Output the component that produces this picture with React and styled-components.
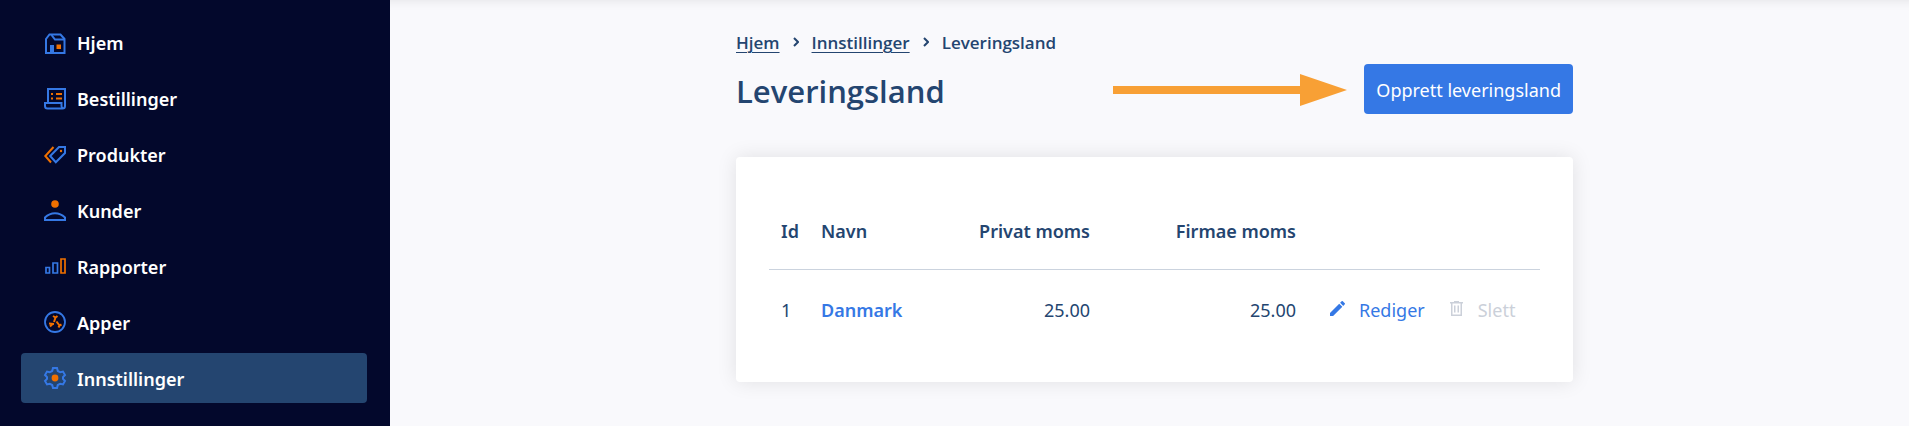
import React from 'react'
import styled, { createGlobalStyle } from 'styled-components'

const GlobalStyle = createGlobalStyle`
  * {
    box-sizing: border-box;
  }

  body {
    margin: 0;
    background-color: #f9f9fc;
    color: #244570;
    font-family: "Noto Sans", "Open Sans", sans-serif;
    font-size: 18px;
    line-height: 24px;
  }
`

const Page = styled.div`
  display: flex;
  min-height: 100vh;
`

const Sidebar = styled.nav`
  display: flex;
  flex-direction: column;
  flex-shrink: 0;
  gap: 6px;
  width: 390px;
  padding: 17px 23px 17px 21px;
  background-color: #03082c;
`

const MenuLink = styled.a`
  display: flex;
  align-items: center;
  gap: 11px;
  height: 50px;
  padding: 0 23px;
  border-radius: 4px;
  background-color: ${({ $active }) => ($active ? '#244570' : 'transparent')};
  color: #fff;
  font-weight: 600;
  text-decoration: none;
`

const MenuLabel = styled.span`
  padding-top: 2px;
`

const MenuIcon = styled.svg`
  flex-shrink: 0;
  width: 22px;
  height: 22px;
  overflow: visible;
  fill: none;
  stroke: #3578e5;
  stroke-width: 2;

  .orange {
    stroke: #f07000;
  }

  .orange-fill {
    fill: #f07000;
    stroke: none;
  }

  .blue-fill {
    fill: #3578e5;
    stroke: none;
  }
`

const Main = styled.main`
  flex: 1;
  padding: 32px 20px 32px 30px;
  box-shadow: inset 0 12px 12px -12px rgba(0, 0, 0, 0.1);
`

const Content = styled.div`
  max-width: 837px;
  margin: 0 auto;
`

const Breadcrumb = styled.nav`
  display: flex;
  align-items: center;
  gap: 13px;
  margin-bottom: 10px;
  font-family: "Open Sans", sans-serif;
  font-size: 17px;
  font-weight: 600;
  line-height: 22px;
`

const BreadcrumbLink = styled.a`
  color: inherit;
  text-decoration: underline;
  text-decoration-thickness: 1px;
  text-underline-offset: 3px;
`

const Chevron = styled.svg`
  width: 6px;
  height: 10px;
  margin-bottom: 2px;
  fill: none;
  stroke: #244570;
  stroke-width: 2;
`

const Header = styled.header`
  display: flex;
  align-items: center;
  gap: 17px;
  margin-bottom: 43px;
`

const Title = styled.h1`
  margin: 0 auto 0 0;
  padding-top: 4px;
  font-family: "Open Sans", sans-serif;
  font-size: 31px;
  font-weight: 600;
  line-height: 46px;
`

const Arrow = styled.svg`
  width: 234px;
  height: 32px;
  margin-top: 2px;
  fill: #f8a035;
`

const CreateButton = styled.button`
  height: 50px;
  padding: 2px 12px 0;
  border: none;
  border-radius: 4px;
  background-color: #3578e5;
  color: #fff;
  font: inherit;
  cursor: pointer;
`

const Card = styled.section`
  padding: 33px;
  border-radius: 4px;
  background-color: #fff;
  box-shadow: 0 0 20px rgba(0, 0, 0, 0.1);
`

const Table = styled.table`
  width: 100%;
  table-layout: fixed;
  border-collapse: separate;
  border-spacing: 0;
`

const HeadCell = styled.th`
  width: ${({ $width }) => $width};
  height: 80px;
  padding: 2px 12px 0;
  border-bottom: 1px solid #cbd3de;
  font-weight: 600;
  text-align: ${({ $align }) => $align || 'left'};
  white-space: nowrap;
`

const Cell = styled.td`
  height: 79px;
  padding: 0 12px;
  text-align: ${({ $align }) => $align || 'left'};
`

const CountryLink = styled.a`
  color: #3578e5;
  font-weight: 600;
  text-decoration: none;
`

const Actions = styled.div`
  display: flex;
  gap: 24px;
  padding-left: 10px;
`

const ActionButton = styled.button`
  display: flex;
  align-items: center;
  gap: 14px;
  padding: 0;
  border: none;
  background: none;
  color: #3578e5;
  font: inherit;
  cursor: pointer;

  &:disabled {
    color: #cbd0d9;
    cursor: default;
  }
`

const ActionIcon = styled.svg`
  width: 15px;
  height: 15px;
  margin-bottom: 2px;
  fill: currentColor;
`

const menuItems = [
  {
    label: 'Hjem',
    icon: (
      <>
        <path d="M2 22V8L5.5 3.5h11L20.5 8v14z" />
        <path d="M7.5 4l3.5 4.5h9.5" />
        <path className="blue-fill" d="M6 14h4v8H6z" />
        <path className="orange-fill" d="M12.5 13.5H17V18h-4.500z" />
      </>
    ),
  },
  {
    label: 'Bestillinger',
    icon: (
      <>
        <path d="M4 16V2h17v17q0 2.500-2.500 2.500H3.500Q1 21.500 1 19v-3h16.500v3q0 2 1.500 2.500" />
        <path className="orange-fill" d="M7 6h2v2H7zM12 6h6v2h-6zM7 10.500h2v2H7zM12 10.500h6v2h-6z" />
      </>
    ),
  },
  {
    label: 'Produkter',
    icon: (
      <>
        <path className="orange" d="M9.500 4L1.300 13l5.700 6.500" />
        <path d="M15 4h6v6l-9.200 9.200L6.200 13z" />
        <circle className="orange-fill" cx="17" cy="8" r="1.200" />
      </>
    ),
  },
  {
    label: 'Kunder',
    icon: (
      <>
        <circle className="orange-fill" cx="11" cy="5" r="3.800" />
        <path d="M1 21v-2.500c3-3 6.500-4.300 10-4.300s7 1.300 10 4.300V21z" />
      </>
    ),
  },
  {
    label: 'Rapporter',
    icon: (
      <>
        <path d="M2 12.500h3.500V18H2zM9 8h4.500v10H9z" strokeWidth="1.700" />
        <path className="orange" d="M17 4h4v14h-4z" strokeWidth="1.700" />
      </>
    ),
  },
  {
    label: 'Apper',
    icon: (
      <>
        <circle cx="11" cy="11" r="10" strokeWidth="1.800" />
        <g className="orange">
          <path d="M11.500 6.500L10 11M9 5l2.500 1.500L13.500 5" />
          <path d="M5 12.500l5 .5M6 15.500l2.500-2.500" />
          <path d="M12.500 10.500l3 4M17.500 13.500L15.500 14.500l-1 2" />
        </g>
      </>
    ),
  },
  {
    label: 'Innstillinger',
    active: true,
    icon: (
      <>
        <path d="M9 1h4l.8 3 2.400 1.300 2.800-.7L21 8l-2 2.200v1.600l2 2.200-2 3.400-2.800-.7-2.400 1.300-.8 3H9l-.8-3-2.400-1.300-2.800.7L1 14l2-2.200v-1.600L1 8l2-3.400 2.800.7L8.200 4z" />
        <circle className="orange-fill" cx="11" cy="11" r="3.400" />
      </>
    ),
  },
]

const countries = [
  { id: 1, name: 'Danmark', privateVat: '25.00', companyVat: '25.00' },
]

const Separator = () => (
  <Chevron viewBox="0 0 6 10" aria-hidden="true">
    <path d="M1 1l4 4-4 4" />
  </Chevron>
)

const Menu = () => (
  <Sidebar>
    {menuItems.map((item) => (
      <MenuLink key={item.label} href="#" $active={item.active}>
        <MenuIcon viewBox="0 0 22 22" aria-hidden="true">
          {item.icon}
        </MenuIcon>
        <MenuLabel>{item.label}</MenuLabel>
      </MenuLink>
    ))}
  </Sidebar>
)

const CountryTable = () => (
  <Table>
    <thead>
      <tr>
        <HeadCell $width="40px">Id</HeadCell>
        <HeadCell>Navn</HeadCell>
        <HeadCell $width="151px" $align="right">Privat moms</HeadCell>
        <HeadCell $width="206px" $align="right">Firmae moms</HeadCell>
        <HeadCell $width="232px" />
      </tr>
    </thead>
    <tbody>
      {countries.map((country) => (
        <tr key={country.id}>
          <Cell>{country.id}</Cell>
          <Cell><CountryLink href="#">{country.name}</CountryLink></Cell>
          <Cell $align="right">{country.privateVat}</Cell>
          <Cell $align="right">{country.companyVat}</Cell>
          <Cell>
            <Actions>
              <ActionButton type="button">
                <ActionIcon viewBox="3 3 18 18" aria-hidden="true">
                  <path d="M3 17.250V21h3.750L17.810 9.940l-3.750-3.750L3 17.250zM20.710 7.040a1 1 0 0 0 0-1.410l-2.340-2.340a1 1 0 0 0-1.410 0l-1.830 1.830 3.750 3.750 1.830-1.830z" />
                </ActionIcon>
                Rediger
              </ActionButton>
              <ActionButton type="button" disabled>
                <ActionIcon viewBox="0 0 15 15" aria-hidden="true">
                  <path fillRule="evenodd" d="M5 0h5v1h4v1.500h-1V15H2V2.500H1V1h4zM3.500 2.500v11h8v-11zM5 4.500h1.500v7H5zM8.500 4.500H10v7H8.500z" />
                </ActionIcon>
                Slett
              </ActionButton>
            </Actions>
          </Cell>
        </tr>
      ))}
    </tbody>
  </Table>
)

const App = () => {
  return (
    <>
      <GlobalStyle />
      <Page>
        <Menu />
        <Main>
          <Content>
            <Breadcrumb aria-label="Breadcrumb">
              <BreadcrumbLink href="#">Hjem</BreadcrumbLink>
              <Separator />
              <BreadcrumbLink href="#">Innstillinger</BreadcrumbLink>
              <Separator />
              <span>Leveringsland</span>
            </Breadcrumb>
            <Header>
              <Title>Leveringsland</Title>
              <Arrow viewBox="0 0 234 32" aria-hidden="true">
                <path d="M0 12h187V0l47 16-47 16V20H0z" />
              </Arrow>
              <CreateButton type="button">Opprett leveringsland</CreateButton>
            </Header>
            <Card>
              <CountryTable />
            </Card>
          </Content>
        </Main>
      </Page>
    </>
  )
}

export default App
